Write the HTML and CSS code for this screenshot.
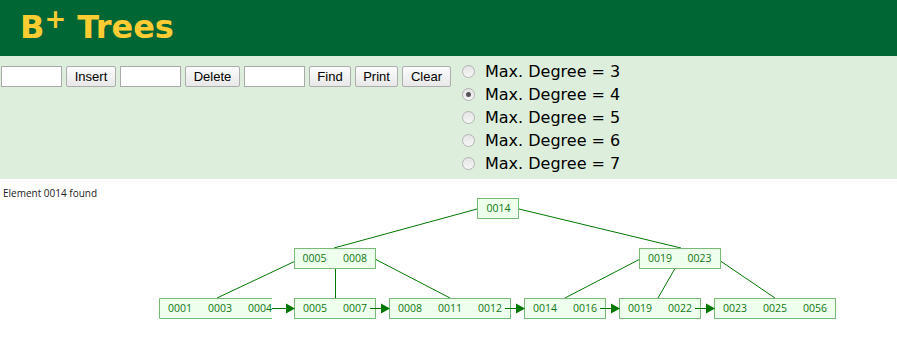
FILE: index.html
```html
<!DOCTYPE html>
<html lang="en">
<head>
  <meta charset="UTF-8">
  <title>B+ Tree Visualization</title>
  <link rel="stylesheet" href="styles.css">
</head>
<body>
  <!-- Header -->
  <header class="header">
    <h1>B<sup>+</sup> Trees</h1>
  </header>

  <!-- Algorithm controls -->
  <div class="controls">
    <div class="actions">
      <input type="text" class="field">
      <button class="btn btn-insert">Insert</button>
      <input type="text" class="field">
      <button class="btn btn-delete">Delete</button>
      <input type="text" class="field">
      <button class="btn btn-find">Find</button>
      <button class="btn btn-print">Print</button>
      <button class="btn btn-clear">Clear</button>
    </div>
    <div class="degrees">
      <label class="degree"><input type="radio" name="degree"> Max. Degree = 3</label>
      <label class="degree"><input type="radio" name="degree" checked> Max. Degree = 4</label>
      <label class="degree"><input type="radio" name="degree"> Max. Degree = 5</label>
      <label class="degree"><input type="radio" name="degree"> Max. Degree = 6</label>
      <label class="degree"><input type="radio" name="degree"> Max. Degree = 7</label>
    </div>
  </div>

  <!-- Canvas -->
  <svg class="canvas" width="897" height="175" viewBox="0 179 897 175">
    <text class="status" x="3" y="197">Element 0014 found</text>

    <!-- edges -->
    <g class="edges">
      <line x1="477" y1="209" x2="334" y2="248"/>
      <line x1="519" y1="209" x2="681" y2="248"/>
      <line x1="304" y1="257" x2="217" y2="298"/>
      <line x1="335.5" y1="259" x2="335.5" y2="298"/>
      <line x1="373" y1="258" x2="450" y2="298"/>
      <line x1="644" y1="257" x2="565" y2="298"/>
      <line x1="681" y1="258" x2="658" y2="298"/>
      <line x1="716" y1="258" x2="775" y2="298"/>
    </g>

    <!-- internal nodes -->
    <rect class="node" x="477.5" y="198.5" width="41" height="20"/>
    <rect class="node" x="294.5" y="248.5" width="81" height="20"/>
    <rect class="node" x="639.5" y="248.5" width="81" height="20"/>

    <!-- leaves -->
    <rect class="leaf-fill" x="160" y="299" width="112" height="19"/>
    <path class="node-edge" d="M272 298.5 H159.5 V318.5 H272"/>
    <rect class="node" x="294.5" y="298.5" width="81" height="20"/>
    <rect class="node" x="389.5" y="298.5" width="121" height="20"/>
    <rect class="node" x="524.5" y="298.5" width="81" height="20"/>
    <rect class="node" x="619.5" y="298.5" width="81" height="20"/>
    <rect class="node" x="714.5" y="298.5" width="121" height="20"/>

    <!-- leaf links -->
    <g class="links">
      <line x1="272" y1="308.5" x2="286" y2="308.5"/>
      <line x1="370" y1="308.5" x2="382" y2="308.5"/>
      <line x1="505" y1="308.5" x2="517" y2="308.5"/>
      <line x1="600" y1="308.5" x2="612" y2="308.5"/>
      <line x1="695" y1="308.5" x2="707" y2="308.5"/>
    </g>
    <g class="heads">
      <polygon points="286,303.5 295,308.5 286,313.5"/>
      <polygon points="381,303.5 390,308.5 381,313.5"/>
      <polygon points="516,303.5 525,308.5 516,313.5"/>
      <polygon points="611,303.5 620,308.5 611,313.5"/>
      <polygon points="706,303.5 715,308.5 706,313.5"/>
    </g>

    <!-- keys -->
    <g class="keys">
      <text x="498.5" y="211.5">0014</text>
      <text x="314.5" y="261.5">0005</text>
      <text x="355" y="261.5">0008</text>
      <text x="660" y="261.5">0019</text>
      <text x="699.5" y="261.5">0023</text>

      <text x="180" y="311.5">0001</text>
      <text x="220" y="311.5">0003</text>
      <text x="260" y="311.5">0004</text>
      <text x="315" y="311.5">0005</text>
      <text x="355" y="311.5">0007</text>
      <text x="410" y="311.5">0008</text>
      <text x="450" y="311.5">0011</text>
      <text x="490" y="311.5">0012</text>
      <text x="545" y="311.5">0014</text>
      <text x="585" y="311.5">0016</text>
      <text x="640" y="311.5">0019</text>
      <text x="680" y="311.5">0022</text>
      <text x="735" y="311.5">0023</text>
      <text x="775" y="311.5">0025</text>
      <text x="815" y="311.5">0056</text>
    </g>
  </svg>
</body>
</html>
```

FILE: styles.css
```css
/* Global */
* {
  margin: 0;
  padding: 0;
  box-sizing: border-box;
}

body {
  background: #fff;
  font-family: 'Liberation Sans', Arial, sans-serif;
  width: 897px;
  height: 354px;
  overflow: hidden;
}

/* Header */
.header {
  background-color: #006633;
  height: 56px;
  padding-left: 20px;
}

.header h1 {
  font-family: 'DejaVu Sans', Verdana, sans-serif;
  font-weight: bold;
  font-size: 32px;
  line-height: 54px;
  color: #ffcc33;
}

.header sup {
  font-size: 26px;
  vertical-align: 10px;
  line-height: 0;
}

/* Controls */
.controls {
  background-color: #ddeedd;
  height: 123px;
  display: flex;
  align-items: flex-start;
}

.actions {
  display: flex;
  gap: 4px;
  margin-top: 10px;
  margin-left: 1px;
}

.field {
  width: 61px;
  height: 21px;
  border: 1px solid #a9a9a9;
  background: #fff;
}

.btn {
  height: 21px;
  font-family: 'Liberation Sans', Arial, sans-serif;
  font-size: 13px;
  color: #000;
  background: linear-gradient(#fcfcfc, #e8e8e8);
  border: 1px solid #adadad;
  border-radius: 2px;
}

.btn-insert { width: 50px; }
.btn-delete { width: 55px; }
.btn-find { width: 42px; }
.btn-print { width: 43px; }
.btn-clear { width: 49px; }

.degrees {
  margin-left: 11px;
  padding-top: 4px;
}

.degree {
  display: flex;
  align-items: center;
  height: 23px;
  gap: 10px;
  font-family: 'DejaVu Sans', Verdana, sans-serif;
  font-size: 16px;
  color: #000;
}

.degree input {
  appearance: none;
  -webkit-appearance: none;
  width: 13px;
  height: 13px;
  border: 1px solid #b4b4b4;
  border-radius: 50%;
  background: linear-gradient(#e4e4e4, #f6f6f6);
  position: relative;
}

.degree input:checked::after {
  content: '';
  position: absolute;
  left: 3px;
  top: 3px;
  width: 5px;
  height: 5px;
  border-radius: 50%;
  background: #555;
}

/* Canvas */
.canvas {
  display: block;
}

.status {
  font-family: 'Open Sans', sans-serif;
  font-size: 10px;
  fill: #222;
}

.edges line,
.links line {
  stroke: #007700;
  stroke-width: 1;
}

.heads polygon {
  fill: #007700;
}

.node {
  fill: #eeffee;
  stroke: #77bb77;
  stroke-width: 1;
}

.leaf-fill {
  fill: #eeffee;
}

.node-edge {
  fill: none;
  stroke: #77bb77;
  stroke-width: 1;
}

.keys text {
  font-family: 'Open Sans', sans-serif;
  font-size: 10.5px;
  fill: #117711;
  text-anchor: middle;
}
```
